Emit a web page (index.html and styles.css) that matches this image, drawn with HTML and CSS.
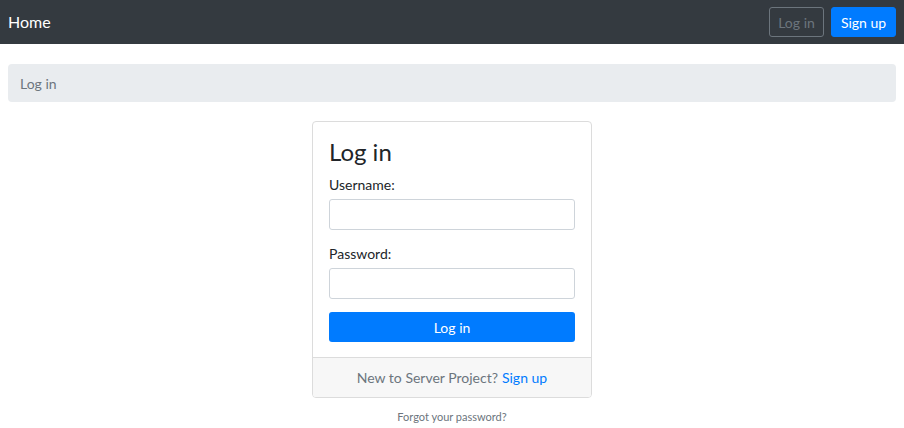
FILE: index.html
```html
<!DOCTYPE html>
<html>
<head>
<meta charset="utf-8">
<link rel="stylesheet" href="styles.css">
</head>
<body>
<nav class="navbar">
  <a class="brand" href="#">Home</a>
  <div class="nav-actions">
    <a class="btn btn-outline" href="#">Log in</a>
    <a class="btn btn-primary" href="#">Sign up</a>
  </div>
</nav>
<div class="page">
  <div class="breadcrumb">Log in</div>
  <div class="card">
    <div class="card-body">
      <h3 class="card-title">Log in</h3>
      <div class="form-group">
        <label class="label">Username:</label>
        <input class="input" type="text">
      </div>
      <div class="form-group">
        <label class="label">Password:</label>
        <input class="input" type="password">
      </div>
      <button class="btn-block">Log in</button>
    </div>
    <div class="card-footer">New to Server Project? <a class="link" href="#">Sign up</a></div>
  </div>
  <div class="forgot"><a href="#">Forgot your password?</a></div>
</div>
</body>
</html>
```
FILE: styles.css
```css
* { box-sizing: border-box; }
html, body { margin: 0; padding: 0; }
body {
  font-family: "Lato", "Open Sans", sans-serif;
  font-size: 14px;
  line-height: 1.5;
  color: #212529;
  background: #fff;
}
.navbar {
  height: 44px;
  background: #343a40;
  display: flex;
  align-items: center;
  justify-content: space-between;
  padding: 0 8px;
}
.brand {
  color: #fff;
  text-decoration: none;
  font-size: 16px;
}
.nav-actions { display: flex; gap: 7px; }
.btn {
  display: inline-flex;
  align-items: center;
  justify-content: center;
  height: 30px;
  padding: 0 8px;
  border-radius: 3px;
  font-size: 14px;
  white-space: nowrap;
  text-decoration: none;
  border: 1px solid transparent;
}
.btn-outline { color: #6c757d; border-color: #6c757d; width: 55px; }
.btn-primary { color: #fff; background: #007bff; border-color: #007bff; width: 65px; }
.page { padding: 20px 8px 0; }
.breadcrumb {
  background: #e9ecef;
  border-radius: 4px;
  height: 38px;
  padding: 0 12px;
  display: flex;
  align-items: center;
  color: #6c757d;
}
.card {
  width: 280px;
  margin: 19px auto 0;
  border: 1px solid #dcdcdc;
  border-radius: 4px;
  overflow: hidden;
}
.card-body { padding: 16px 16px 15px; }
.card-title {
  margin: 0 0 9px;
  font-size: 24px;
  font-weight: 400;
  line-height: 28px;
}
.form-group { margin-bottom: 14px; }
.form-group:last-of-type { margin-bottom: 13px; }
.label { display: block; margin-bottom: 4px; line-height: 20px; }
.input {
  display: block;
  width: 100%;
  height: 31px;
  border: 1px solid #ced4da;
  border-radius: 3px;
  font: inherit;
}
.btn-block {
  display: block;
  width: 100%;
  height: 30px;
  border: 0;
  border-radius: 3px;
  background: #007bff;
  color: #fff;
  font: inherit;
  font-size: 14px;
}
.card-footer {
  background: #f7f7f7;
  border-top: 1px solid #dcdcdc;
  height: 40px;
  display: flex;
  align-items: center;
  justify-content: center;
  color: #6c757d;
}
.link { color: #007bff; text-decoration: none; margin-left: 4px; }
.forgot { text-align: center; margin-top: 11px; font-size: 11px; }
.forgot a { color: #6c757d; text-decoration: none; }
```
